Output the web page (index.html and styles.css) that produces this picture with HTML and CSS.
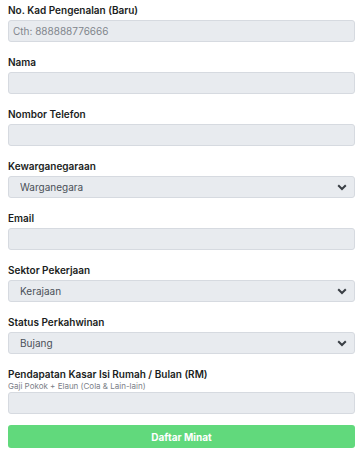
FILE: index.html
```html
<!DOCTYPE html>
<html>
<head>
<meta charset="utf-8">
<link rel="stylesheet" href="styles.css">
</head>
<body>
<form class="form">
  <div class="field">
    <label class="label">No. Kad Pengenalan (Baru)</label>
    <input class="input" type="text" placeholder="Cth: 888888776666">
  </div>
  <div class="field">
    <label class="label">Nama</label>
    <input class="input" type="text">
  </div>
  <div class="field">
    <label class="label">Nombor Telefon</label>
    <input class="input" type="text">
  </div>
  <div class="field">
    <label class="label">Kewarganegaraan</label>
    <div class="select-wrap">
      <select class="select"><option>Warganegara</option></select>
      <svg class="chev" viewBox="0 0 10 7" width="10" height="7"><path d="M1.2 1.2 L5 5 L8.8 1.2" fill="none" stroke="#3a3f45" stroke-width="2"/></svg>
    </div>
  </div>
  <div class="field">
    <label class="label">Email</label>
    <input class="input" type="text">
  </div>
  <div class="field">
    <label class="label">Sektor Pekerjaan</label>
    <div class="select-wrap">
      <select class="select"><option>Kerajaan</option></select>
      <svg class="chev" viewBox="0 0 10 7" width="10" height="7"><path d="M1.2 1.2 L5 5 L8.8 1.2" fill="none" stroke="#3a3f45" stroke-width="2"/></svg>
    </div>
  </div>
  <div class="field">
    <label class="label">Status Perkahwinan</label>
    <div class="select-wrap">
      <select class="select"><option>Bujang</option></select>
      <svg class="chev" viewBox="0 0 10 7" width="10" height="7"><path d="M1.2 1.2 L5 5 L8.8 1.2" fill="none" stroke="#3a3f45" stroke-width="2"/></svg>
    </div>
  </div>
  <div class="field">
    <label class="label label-tight">Pendapatan Kasar Isi Rumah / Bulan (RM)</label>
    <span class="help">Gaji Pokok + Elaun (Cola &amp; Lain-lain)</span>
    <input class="input" type="text">
  </div>
  <button class="btn" type="button">Daftar Minat</button>
</form>
</body>
</html>
```

FILE: styles.css
```css
* { box-sizing: border-box; }
html, body { margin: 0; padding: 0; background: #fff; }
body {
  font-family: Inter, "Noto Sans", "Liberation Sans", sans-serif;
  color: #1a202c;
}
.form {
  display: flex;
  flex-direction: column;
  padding: 3px 8px 0 8px;
}
.field {
  display: flex;
  flex-direction: column;
  margin-bottom: 13px;
}
.label {
  font-size: 10px;
  line-height: 14px;
  font-weight: 600;
  margin-bottom: 3px;
  color: #1a1d21;
}
.label-tight { margin-bottom: 0; }
.help {
  font-size: 8px;
  line-height: 10px;
  color: #7b8088;
  margin-bottom: 1px;
}
.input, .select {
  display: block;
  width: 100%;
  height: 22px;
  margin: 0;
  border: 1px solid #d6dae0;
  border-radius: 3px;
  background: #e8ebef;
  font-family: inherit;
  font-size: 10px;
  color: #4a5058;
  outline: none;
}
.input { padding: 0 4px; }
.input::placeholder { color: #80858c; }
.select-wrap { position: relative; }
.select {
  -webkit-appearance: none;
  appearance: none;
  padding: 0 0 0 11px;
}
.chev {
  position: absolute;
  right: 8px;
  top: 8px;
  pointer-events: none;
}
.btn {
  display: block;
  width: 100%;
  height: 23px;
  margin: -2px 0 0 0;
  border: none;
  border-radius: 3px;
  background: #61d97c;
  color: #fff;
  font-family: inherit;
  font-size: 10px;
  font-weight: 700;
}
```
